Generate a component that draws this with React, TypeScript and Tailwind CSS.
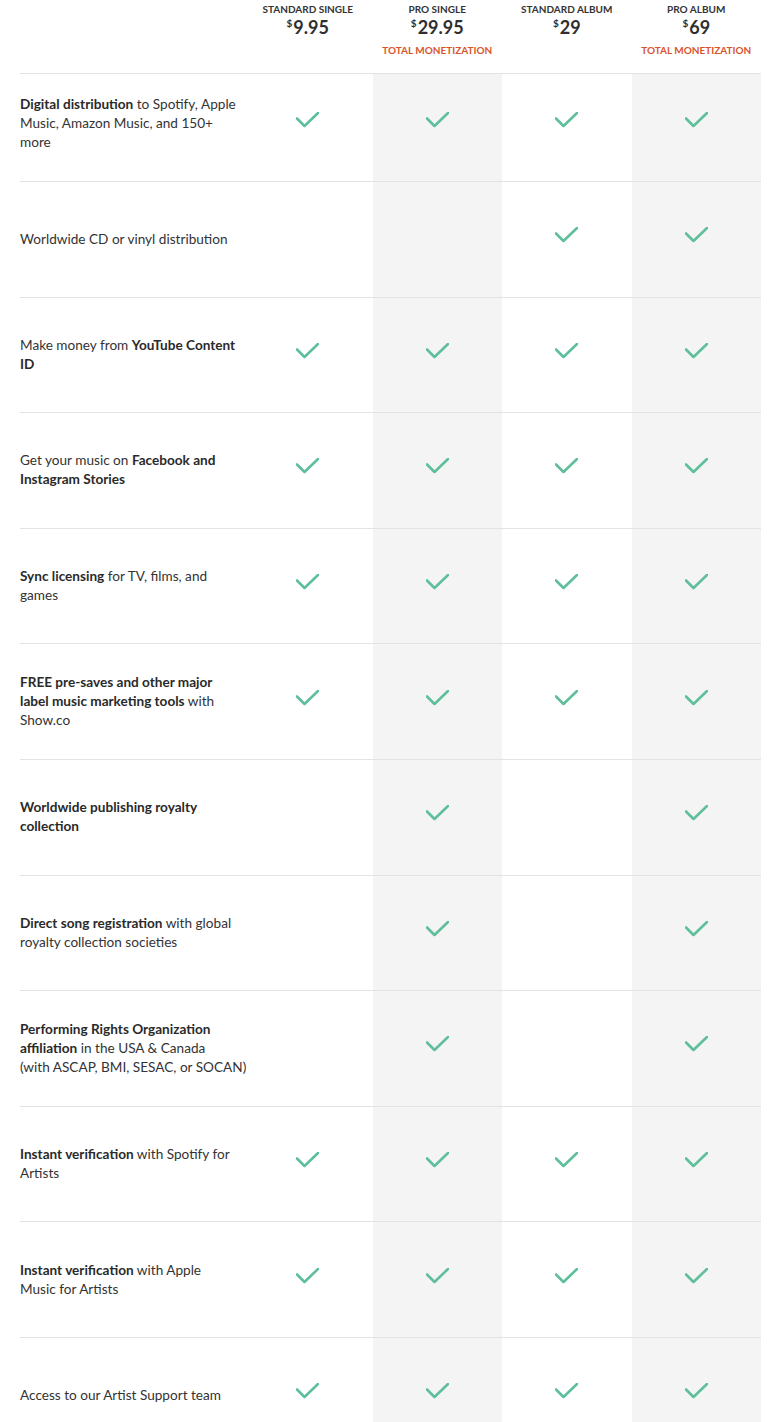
import React from 'react';

type Plan = { name: string; price: string; tag?: boolean; shaded: boolean };

const plans: Plan[] = [
  { name: 'Standard Single', price: '9.95', shaded: false },
  { name: 'Pro Single', price: '29.95', tag: true, shaded: true },
  { name: 'Standard Album', price: '29', shaded: false },
  { name: 'Pro Album', price: '69', tag: true, shaded: true },
];

type Feature = { label: React.ReactNode; has: number[] };

const features: Feature[] = [
  {
    label: (
      <>
        <b>Digital distribution</b> to Spotify, Apple
        <br />
        Music, Amazon Music, and 150+
        <br />
        more
      </>
    ),
    has: [1, 1, 1, 1],
  },
  { label: <>Worldwide CD or vinyl distribution</>, has: [0, 0, 1, 1] },
  {
    label: (
      <>
        Make money from <b>YouTube Content</b>
        <br />
        <b>ID</b>
      </>
    ),
    has: [1, 1, 1, 1],
  },
  {
    label: (
      <>
        Get your music on <b>Facebook and</b>
        <br />
        <b>Instagram Stories</b>
      </>
    ),
    has: [1, 1, 1, 1],
  },
  {
    label: (
      <>
        <b>Sync licensing</b> for TV, films, and
        <br />
        games
      </>
    ),
    has: [1, 1, 1, 1],
  },
  {
    label: (
      <>
        <b>FREE pre-saves and other major</b>
        <br />
        <b>label music marketing tools</b> with
        <br />
        Show.co
      </>
    ),
    has: [1, 1, 1, 1],
  },
  {
    label: (
      <>
        <b>Worldwide publishing royalty</b>
        <br />
        <b>collection</b>
      </>
    ),
    has: [0, 1, 0, 1],
  },
  {
    label: (
      <>
        <b>Direct song registration</b> with global
        <br />
        royalty collection societies
      </>
    ),
    has: [0, 1, 0, 1],
  },
  {
    label: (
      <>
        <b>Performing Rights Organization</b>
        <br />
        <b>affiliation</b> in the USA &amp; Canada
        <br />
        (with ASCAP, BMI, SESAC, or SOCAN)
      </>
    ),
    has: [0, 1, 0, 1],
  },
  {
    label: (
      <>
        <b>Instant verification</b> with Spotify for
        <br />
        Artists
      </>
    ),
    has: [1, 1, 1, 1],
  },
  {
    label: (
      <>
        <b>Instant verification</b> with Apple
        <br />
        Music for Artists
      </>
    ),
    has: [1, 1, 1, 1],
  },
  { label: <>Access to our Artist Support team</>, has: [1, 1, 1, 1] },
];

function Check() {
  return (
    <svg width="23" height="16" viewBox="0 0 23 16" fill="none" className="mb-2">
      <path d="M1 6.5L8.5 14L22 1" stroke="#5fbf9b" strokeWidth="2.6" strokeLinecap="round" strokeLinejoin="round" />
    </svg>
  );
}

export default function App() {
  return (
    <div className="w-[768px] bg-white text-[#333] overflow-hidden" style={{ fontFamily: 'Lato, "Open Sans", sans-serif' }}>
      <div className="ml-[20px] w-[741px]">
        {/* plan header */}
        <div className="grid grid-cols-[223px_repeat(4,1fr)] h-[73px]">
          <div />
          {plans.map((p) => (
            <div key={p.name} className="flex flex-col items-center pt-[3px]">
              <div className="text-[10px] leading-[13px] font-bold uppercase">{p.name}</div>
              <div className="text-[18px] leading-[22px] font-bold text-[#2f2f2f]">
                <sup className="text-[10px] font-bold -top-[7px] mr-[1px]">$</sup>
                {p.price}
              </div>
              {p.tag && (
                <div className="mt-[6px] text-[10px] leading-[13px] font-bold uppercase text-[#d9542b]">
                  Total Monetization
                </div>
              )}
            </div>
          ))}
        </div>

        {/* feature rows */}
        {features.map((f, i) => (
          <div
            key={i}
            className={`grid grid-cols-[223px_repeat(4,1fr)] border-t border-[#e3e3e3] ${
              i === 0 ? 'h-[108px]' : 'h-[115.6px]'
            }`}
          >
            <div className={`flex items-center text-[13.6px] leading-[19px] ${i === 0 ? 'pb-[8px]' : ''}`}>
              <div className="whitespace-nowrap [&_b]:font-bold [&_b]:text-[#2a2a2a]">{f.label}</div>
            </div>
            {f.has.map((h, j) => (
              <div
                key={j}
                className={`flex items-center justify-center ${plans[j].shaded ? 'bg-[#f4f4f4]' : ''} ${
                  i === 0 ? 'pb-[7px]' : ''
                }`}
              >
                {h ? <Check /> : null}
              </div>
            ))}
          </div>
        ))}
      </div>
    </div>
  );
}
